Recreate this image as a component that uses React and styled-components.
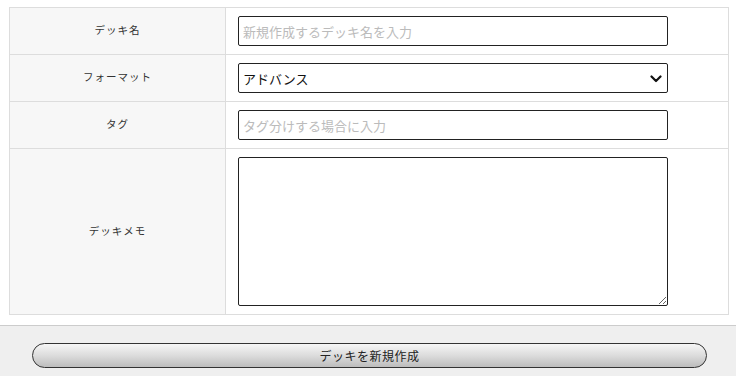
import styled, { createGlobalStyle } from 'styled-components'

const GlobalStyle = createGlobalStyle`
  html, body {
    margin: 0;
    padding: 0;
    background: #fff;
    font-family: "Noto Sans CJK JP", "Noto Sans", sans-serif;
    color: #333;
  }
  * { box-sizing: border-box; }
`

const rows = [
  { label: 'デッキ名', kind: 'input', placeholder: '新規作成するデッキ名を入力' },
  { label: 'フォーマット', kind: 'select', value: 'アドバンス' },
  { label: 'タグ', kind: 'input', placeholder: 'タグ分けする場合に入力' },
  { label: 'デッキメモ', kind: 'textarea' },
]

const App = () => {
  return (
    <>
      <GlobalStyle />
      <Wrapper>
        <Form>
          {rows.map((row) => (
            <Row key={row.label}>
              <Label>{row.label}</Label>
              <Field>
                {row.kind === 'input' && <TextInput placeholder={row.placeholder} />}
                {row.kind === 'select' && (
                  <SelectBox>
                    <Select defaultValue={row.value}>
                      <option>アドバンス</option>
                      <option>スタンダード</option>
                    </Select>
                    <Chevron viewBox="0 0 12 8">
                      <path d="M1.5 1.5 L6 6 L10.5 1.5" fill="none" stroke="#111" strokeWidth="2.2" strokeLinecap="round" strokeLinejoin="round" />
                    </Chevron>
                  </SelectBox>
                )}
                {row.kind === 'textarea' && <Memo />}
              </Field>
            </Row>
          ))}
        </Form>
      </Wrapper>
      <Footer>
        <SubmitButton>デッキを新規作成</SubmitButton>
      </Footer>
    </>
  )
}

export default App

const Wrapper = styled.div`
  padding: 7px 7px 10px 9px;
`

const Form = styled.div`
  border-top: 1px solid #ddd;
  border-left: 1px solid #ddd;
`

const Row = styled.div`
  display: grid;
  grid-template-columns: 216px 1fr;
`

const Label = styled.div`
  display: flex;
  align-items: center;
  justify-content: center;
  padding-bottom: 3px;
  background: #f7f7f7;
  border-right: 1px solid #ddd;
  border-bottom: 1px solid #ddd;
  font-size: 10.5px;
  letter-spacing: 1px;
  color: #333;
`

const Field = styled.div`
  padding: 8px 12px;
  border-right: 1px solid #ddd;
  border-bottom: 1px solid #ddd;
  background: #fff;
`

const TextInput = styled.input`
  display: block;
  width: 430px;
  height: 30px;
  border: 1px solid #222;
  border-radius: 2px;
  padding: 0 4px;
  font-family: "Noto Sans CJK JP", sans-serif;
  font-size: 13px;
  color: #222;
  outline: none;
  &::placeholder {
    color: #bbb;
  }
`

const SelectBox = styled.div`
  position: relative;
  width: 430px;
  height: 30px;
`

const Select = styled.select`
  appearance: none;
  display: block;
  width: 100%;
  height: 100%;
  border: 1px solid #222;
  border-radius: 2px;
  padding: 0 4px;
  background: #fff;
  font-family: "Noto Sans CJK JP", sans-serif;
  font-size: 13px;
  color: #111;
  outline: none;
`

const Chevron = styled.svg`
  position: absolute;
  right: 6px;
  top: 12px;
  width: 12px;
  height: 8px;
  pointer-events: none;
`

const Memo = styled.textarea`
  display: block;
  width: 430px;
  height: 149px;
  border: 1px solid #222;
  border-radius: 2px;
  padding: 4px;
  font-family: "Noto Sans CJK JP", sans-serif;
  font-size: 13px;
  outline: none;
`

const Footer = styled.div`
  border-top: 1px solid #ccc;
  background: #efefef;
  padding: 17px 29px 10px 32px;
`

const SubmitButton = styled.button`
  display: block;
  width: 100%;
  height: 25px;
  border: 1px solid #333;
  border-radius: 13px;
  background: linear-gradient(to bottom, #f6f6f6 0%, #dcdcdc 50%, #bdbdbd 100%);
  font-family: "Noto Sans CJK JP", sans-serif;
  font-size: 12px;
  color: #222;
  letter-spacing: 0.5px;
  padding: 0;
`
